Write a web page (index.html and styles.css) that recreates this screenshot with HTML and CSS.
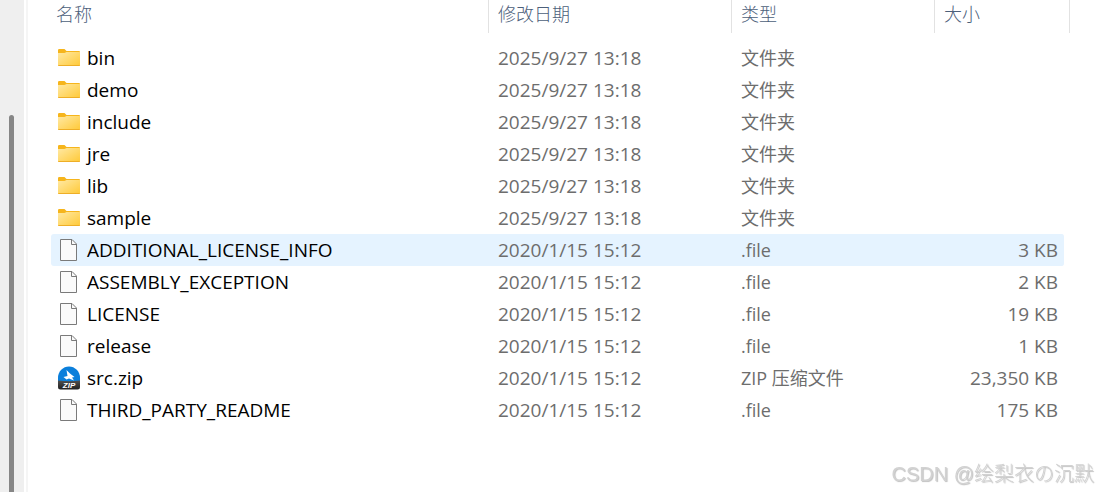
FILE: index.html
```html
<!DOCTYPE html>
<html lang="zh-CN">
<head>
  <meta charset="UTF-8">
  <meta name="viewport" content="width=device-width, initial-scale=1.0">
  <link rel="stylesheet" href="styles.css">
  <title>JDK</title>
</head>
<body>
  <!-- shared icons -->
  <svg class="sprite" width="0" height="0" aria-hidden="true">
    <defs>
      <linearGradient id="folder-fill" x1="0" y1="0" x2="1" y2="1">
        <stop offset="0" stop-color="#ffe9a4"/>
        <stop offset="1" stop-color="#ffc937"/>
      </linearGradient>
      <linearGradient id="zip-bar" x1="0" y1="0" x2="0" y2="1">
        <stop offset="0" stop-color="#505050"/>
        <stop offset="1" stop-color="#202020"/>
      </linearGradient>
    </defs>
    <symbol id="icon-folder" viewBox="0 0 24 24">
      <path d="M1 4.200Q1 3 2.200 3H7.500L9.500 5H22Q23 5 23 6V10H1z" fill="#f6b51c"/>
      <path d="M1 7H7.500L9.500 6H23V19Q23 20 22 20H2Q1 20 1 19z" fill="url(#folder-fill)"/>
      <path d="M1 19H23Q23 20 22 20H2Q1 20 1 19z" fill="#eeae27"/>
    </symbol>
    <symbol id="icon-file" viewBox="0 0 24 24">
      <path d="M3.500 1.500H15L19.500 6V22.500H3.500z" fill="#fafafa" stroke="#7a7a7a"/>
      <path d="M14.500 1.500V6.500H19.500" fill="none" stroke="#7a7a7a"/>
    </symbol>
  </svg>

  <div class="explorer">
    <div class="scroll-strip">
      <div class="scroll-thumb"></div>
    </div>
    <main class="content">
      <table class="file-list">
        <thead>
          <tr>
            <th class="col-name"><button type="button">名称</button></th>
            <th class="col-date"><button type="button">修改日期</button></th>
            <th class="col-type"><button type="button">类型</button></th>
            <th class="col-size"><button type="button">大小</button></th>
          </tr>
        </thead>
        <tbody>
          <tr>
            <td><span class="name"><svg class="icon"><use href="#icon-folder"/></svg>bin</span></td>
            <td>2025/9/27 13:18</td>
            <td class="type">文件夹</td>
            <td class="size"></td>
          </tr>
          <tr>
            <td><span class="name"><svg class="icon"><use href="#icon-folder"/></svg>demo</span></td>
            <td>2025/9/27 13:18</td>
            <td class="type">文件夹</td>
            <td class="size"></td>
          </tr>
          <tr>
            <td><span class="name"><svg class="icon"><use href="#icon-folder"/></svg>include</span></td>
            <td>2025/9/27 13:18</td>
            <td class="type">文件夹</td>
            <td class="size"></td>
          </tr>
          <tr>
            <td><span class="name"><svg class="icon"><use href="#icon-folder"/></svg>jre</span></td>
            <td>2025/9/27 13:18</td>
            <td class="type">文件夹</td>
            <td class="size"></td>
          </tr>
          <tr>
            <td><span class="name"><svg class="icon"><use href="#icon-folder"/></svg>lib</span></td>
            <td>2025/9/27 13:18</td>
            <td class="type">文件夹</td>
            <td class="size"></td>
          </tr>
          <tr>
            <td><span class="name"><svg class="icon"><use href="#icon-folder"/></svg>sample</span></td>
            <td>2025/9/27 13:18</td>
            <td class="type">文件夹</td>
            <td class="size"></td>
          </tr>
          <tr class="active">
            <td><span class="name"><svg class="icon"><use href="#icon-file"/></svg>ADDITIONAL_LICENSE_INFO</span></td>
            <td>2020/1/15 15:12</td>
            <td class="type">.file</td>
            <td class="size">3 KB</td>
          </tr>
          <tr>
            <td><span class="name"><svg class="icon"><use href="#icon-file"/></svg>ASSEMBLY_EXCEPTION</span></td>
            <td>2020/1/15 15:12</td>
            <td class="type">.file</td>
            <td class="size">2 KB</td>
          </tr>
          <tr>
            <td><span class="name"><svg class="icon"><use href="#icon-file"/></svg>LICENSE</span></td>
            <td>2020/1/15 15:12</td>
            <td class="type">.file</td>
            <td class="size">19 KB</td>
          </tr>
          <tr>
            <td><span class="name"><svg class="icon"><use href="#icon-file"/></svg>release</span></td>
            <td>2020/1/15 15:12</td>
            <td class="type">.file</td>
            <td class="size">1 KB</td>
          </tr>
          <tr>
            <td>
              <span class="name">
                <svg class="icon" viewBox="0 0 24 24">
                  <path d="M1 17V12A11 11.500 0 0 1 23 12V17z" fill="#0b7fdb"/>
                  <path d="M9.500 4L13 7.500L17.500 11L15 11.500L17 14.500L12 12.500L9.500 13.500L6.500 11L10.500 10z" fill="#fff"/>
                  <path d="M1 14.500Q12 16 23 14.500V21Q23 23.500 20.500 23.500H3.500Q1 23.500 1 21z" fill="url(#zip-bar)"/>
                  <text x="12" y="22" text-anchor="middle" class="zip-text">ZIP</text>
                </svg>src.zip
              </span>
            </td>
            <td>2020/1/15 15:12</td>
            <td class="type">ZIP 压缩文件</td>
            <td class="size">23,350 KB</td>
          </tr>
          <tr>
            <td><span class="name"><svg class="icon"><use href="#icon-file"/></svg>THIRD_PARTY_README</span></td>
            <td>2020/1/15 15:12</td>
            <td class="type">.file</td>
            <td class="size">175 KB</td>
          </tr>
        </tbody>
      </table>
    </main>
  </div>
  <div class="watermark">CSDN @绘梨衣の沉默</div>
</body>
</html>
```

FILE: styles.css
```css
body {
  margin: 0;
  background-color: #ffffff;
  color: #6d6d6d;
  font-family: "Open Sans", "Noto Sans CJK SC", sans-serif;
  font-size: 19px;
}
.sprite {
  position: absolute;
}
.explorer {
  display: flex;
  min-height: 100vh;
}
.scroll-strip {
  display: flex;
  width: 24px;
  padding: 115px 10px 0 9px;
  box-sizing: border-box;
  background-color: #efefef;
}
.scroll-thumb {
  flex: 1;
  background-color: #868686;
  border-radius: 3px 3px 0 0;
}
.content {
  flex: 1;
  margin-left: 2px;
  padding: 0 28px 0 23px;
  border-left: 2px solid #f5f5f5;
}
.file-list {
  width: 100%;
  table-layout: fixed;
  border-spacing: 0;
}
th {
  height: 33px;
  padding: 0;
  border-right: 1px solid #e2e2e2;
  box-sizing: border-box;
  text-align: left;
  vertical-align: top;
}
.col-date {
  width: 243px;
}
.col-type {
  width: 203px;
}
.col-size {
  width: 135px;
}
th button {
  display: block;
  width: 100%;
  padding: 0 9px;
  border: none;
  background: none;
  color: #4c607a;
  font-family: "Noto Sans CJK SC", sans-serif;
  font-size: 18px;
  font-weight: 300;
  line-height: 26px;
  text-align: left;
}
th.col-name button {
  padding-left: 5px;
}
/* space between the header and the first row */
tbody::before {
  content: "";
  display: table-row;
  height: 9px;
}
td {
  height: 32px;
  padding: 0 9px;
  line-height: 32px;
  white-space: nowrap;
}
td:first-child {
  padding-left: 6px;
  border-radius: 3px 0 0 3px;
}
.name {
  display: flex;
  align-items: center;
  gap: 6px;
  color: #000000;
}
.icon {
  flex: none;
  width: 24px;
  height: 24px;
}
.zip-text {
  fill: #ffffff;
  font-family: "Liberation Sans", sans-serif;
  font-size: 8px;
  font-weight: bold;
  font-style: italic;
}
.type {
  font-size: 18px;
}
td.size {
  padding-right: 6px;
  border-right: 6px solid transparent;
  border-radius: 0 8px 8px 0 / 0 3px 3px 0;
  background-clip: padding-box;
  text-align: right;
}
.active td {
  background-color: #e5f3ff;
}
.watermark {
  position: fixed;
  right: 4px;
  bottom: 4px;
  color: #d2d2d2;
  font-family: "Liberation Sans", "Noto Sans CJK SC", sans-serif;
  font-size: 20px;
  font-weight: 300;
  line-height: 28px;
  text-shadow: 1px 1px 1px #c0c0c0;
}
```
